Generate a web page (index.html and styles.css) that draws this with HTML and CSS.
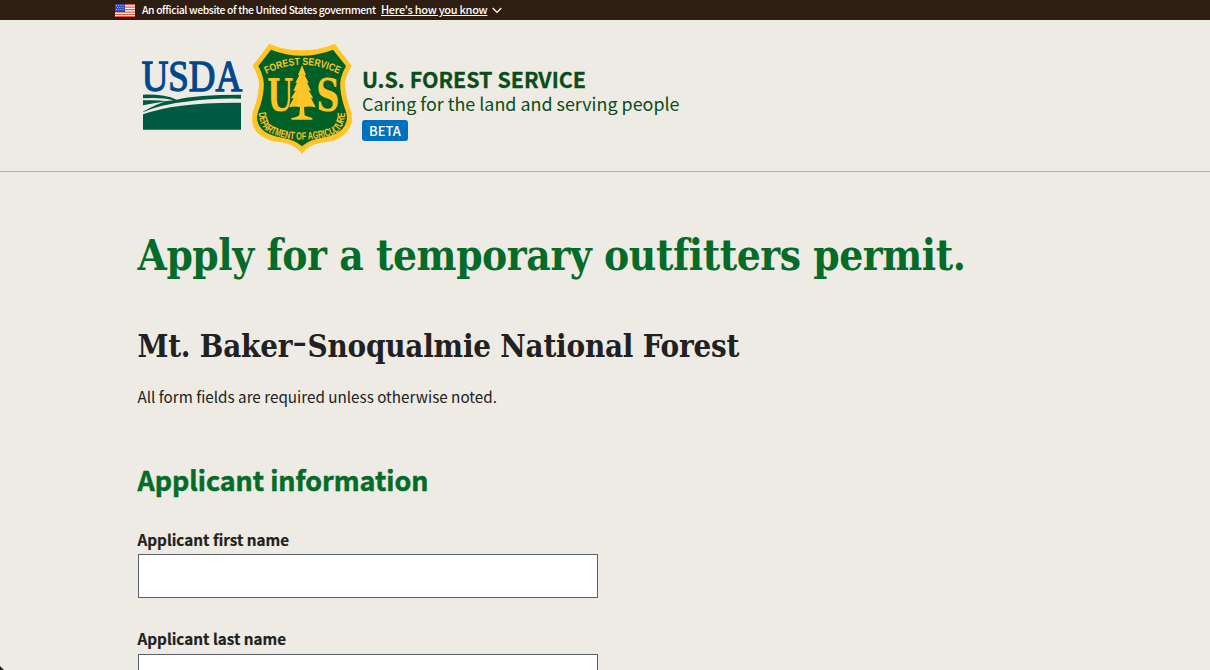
FILE: index.html
```html
<!DOCTYPE html>
<html lang="en">
<head>
<meta charset="utf-8">
<title>Apply for a temporary outfitters permit</title>
<link rel="stylesheet" href="styles.css">
</head>
<body>
<div class="banner">
  <svg class="flag" viewBox="0 0 20 13" width="20" height="13">
    <rect width="20" height="13" fill="#fff"/>
    <path d="M0 .7H20M0 3.2H20M0 5.7H20M0 8.2H20M0 10.5H20M0 12.6H20" stroke="#e8563f" stroke-width="1.2"/>
    <rect width="10" height="8" fill="#3347b5"/>
    <path d="M1 1.5H9M2 3.5H9M1 5.5H9" stroke="#c9d0f5" stroke-width=".8" stroke-dasharray="1 1.2"/>
  </svg>
  <span class="banner-text">An official website of the United States government</span>
  <a class="banner-link" href="#">Here's how you know</a>
  <svg class="chevron" viewBox="0 0 10 7" width="10" height="7"><path d="M.7 1 5 5.4 9.3 1" fill="none" stroke="#fff" stroke-width="1.3"/></svg>
</div>
<header class="header">
  <svg class="usda" viewBox="15 24 306 222" width="102" height="74">
    <text x="17" y="122" textLength="301" lengthAdjust="spacingAndGlyphs" class="usda-text">USDA</text>
    <path fill="#005941" d="M21 134Q85 132 122 149Q180 134 315 134V146Q230 144 160 154Q75 163 21 187V185Q60 163 91 153H21V151Q60 150 93 153L112 151Q75 141 21 145Z"/>
    <path fill="#005941" d="M21 153Q60 151 94 154Q58 158 21 166ZM21 193Q120 156 315 158V239H21Z"/>
  </svg>
  <svg class="shield" viewBox="15 12 306 339" width="102" height="113">
    <path fill="#ffc425" d="M70 17Q115 37 167 37Q220 37 266 17L317 83Q293 122 298 150Q301 180 313 214Q327 256 301 284Q279 308 234 313Q190 318 168 347Q146 318 103 313Q57 308 34 284Q9 256 23 214Q36 180 38 150Q43 122 20 83Z"/>
    <path fill="#006127" d="M75 35Q120 53 167 53Q215 53 261 35L300 84Q279 121 283 151Q286 185 300 221Q309 251 289 273Q270 293 229 299Q190 304 168 325Q146 304 107 299Q66 293 47 273Q27 251 36 221Q51 185 53 151Q57 121 37 84Z"/>
    <path id="top-arc" fill="none" d="M61 108Q165 54 276 107"/>
    <path id="bottom-arc" fill="none" d="M38 224Q42 272 72 285Q115 305 168 305Q224 305 267 287Q297 272 297 220"/>
    <text class="seal-top"><textPath href="#top-arc" textLength="226" lengthAdjust="spacingAndGlyphs">FOREST SERVICE</textPath></text>
    <text class="seal-bottom"><textPath href="#bottom-arc" textLength="346" lengthAdjust="spacingAndGlyphs">DEPARTMENT OF AGRICULTURE</textPath></text>
    <text class="seal-us" x="64" y="219" textLength="78" lengthAdjust="spacingAndGlyphs">U</text>
    <text class="seal-us" x="211" y="219" textLength="70" lengthAdjust="spacingAndGlyphs">S</text>
    <path class="seal-tree" d="M168 82L180 111L176 111L188 135L183 134L195 158L188 157L202 181L195 180L209 208Q190 203 174 207L176 232Q182 236 199 240V245H136V240Q155 237 160 231L162 207Q144 204 128 208L143 181L135 181L149 158L142 158L153 134L148 135L160 111L156 111Z"/>
  </svg>
  <div class="agency">
    <div class="agency-name">U.S. FOREST SERVICE</div>
    <div class="tagline">Caring for the land and serving people</div>
    <span class="beta">BETA</span>
  </div>
</header>
<main class="main">
  <h1 class="title">Apply for a temporary outfitters permit.</h1>
  <h2 class="forest">Mt. Baker<span class="hyphen">-</span>Snoqualmie National Forest</h2>
  <p class="note">All form fields are required unless otherwise noted.</p>
  <h3 class="section">Applicant information</h3>
  <label class="label" for="first">Applicant first name</label>
  <input class="input" id="first" type="text">
  <label class="label" for="last">Applicant last name</label>
  <input class="input" id="last" type="text">
</main>
<div class="corner"></div>
</body>
</html>
```
FILE: styles.css
```css
* { box-sizing: border-box; }
html { overflow: hidden; }
body {
  margin: 0;
  height: 670px;
  overflow: hidden;
  background: #eeebe4;
  color: #212121;
  font-family: "Noto Sans CJK SC", "Open Sans", sans-serif;
}
.banner {
  display: flex;
  align-items: center;
  height: 20px;
  padding-left: 115px;
  background: #2e1d11;
  color: #fff;
  white-space: nowrap;
}
.banner-text { margin-left: 7px; width: 239px; font-size: 10.4px; line-height: 20px; font-weight: 500; letter-spacing: -0.38px; }
.banner-link { width: 107px; height: 20px; color: #fff; font-size: 11px; line-height: 18px; font-weight: 500; letter-spacing: -0.29px; text-underline-offset: 1px; }
.chevron { margin-left: 4px; }
.header {
  display: flex;
  align-items: flex-start;
  height: 152px;
  padding: 22px 0 0 141px;
  border-bottom: 1px solid #aeb0b5;
}
.usda { margin-top: 16px; overflow: visible; }
.shield { margin-left: 8px; }
.usda-text { font: 132px "Liberation Serif", serif; fill: #00488c; stroke: #00488c; stroke-width: 4px; }
.seal-top { font: bold 31px "Liberation Sans", sans-serif; fill: #ffc425; }
.seal-bottom { font: bold 32px "Liberation Sans", sans-serif; fill: #ffc425; }
.seal-us { font: bold 136px "DejaVu Serif Condensed", "DejaVu Serif", serif; fill: #ffc425; }
.seal-tree { fill: #ffc425; }
.agency { margin: 24px 0 0 9px; color: #0b4c1a; white-space: nowrap; }
.agency-name { font-size: 21.45px; line-height: 26px; font-weight: 700; -webkit-text-stroke: 0.3px #0b4c1a; }
.tagline { font-size: 17.9px; line-height: 22px; }
.beta {
  display: block;
  width: 46px;
  height: 21px;
  margin-top: 6px;
  border-radius: 3px;
  background: #0071bc;
  color: #fff;
  text-align: center;
  font-size: 13px;
  line-height: 21px;
  font-weight: 500;
}
.main { padding: 54px 0 0 137.5px; white-space: nowrap; }
.title, .forest { margin: 0; font-family: "DejaVu Serif Condensed", "DejaVu Serif", serif; font-stretch: condensed; font-weight: 700; }
.title { color: #046b28; font-size: 42px; line-height: 60px; letter-spacing: -0.44px; }
.forest { margin-top: 38px; font-size: 31px; line-height: 44px; letter-spacing: -0.21px; }
.hyphen { display: inline-block; line-height: 1; vertical-align: 3px; transform: scale(1.25, 0.75); margin: 0 2px; }
.note { margin: 15px 0 0; font-size: 15.23px; line-height: 26px; }
.section { margin: 52px 0 0; color: #046b28; font-size: 26.85px; line-height: 38px; font-weight: 700; -webkit-text-stroke: 0.5px #046b28; }
.label { display: block; margin-top: 28px; font-size: 15.25px; line-height: 24px; font-weight: 700; -webkit-text-stroke: 0.2px #212121; }
.input { display: block; width: 460px; height: 44px; margin-top: 3px; border: 1px solid #5b616b; border-radius: 0; background: #fff; }
.input + .label { margin-top: 28px; }
.input + .label + .input { margin-top: 4px; }
.corner { position: absolute; left: 0; bottom: 0; width: 4px; height: 4px; background: linear-gradient(45deg, #222 48%, transparent 52%); }
```
